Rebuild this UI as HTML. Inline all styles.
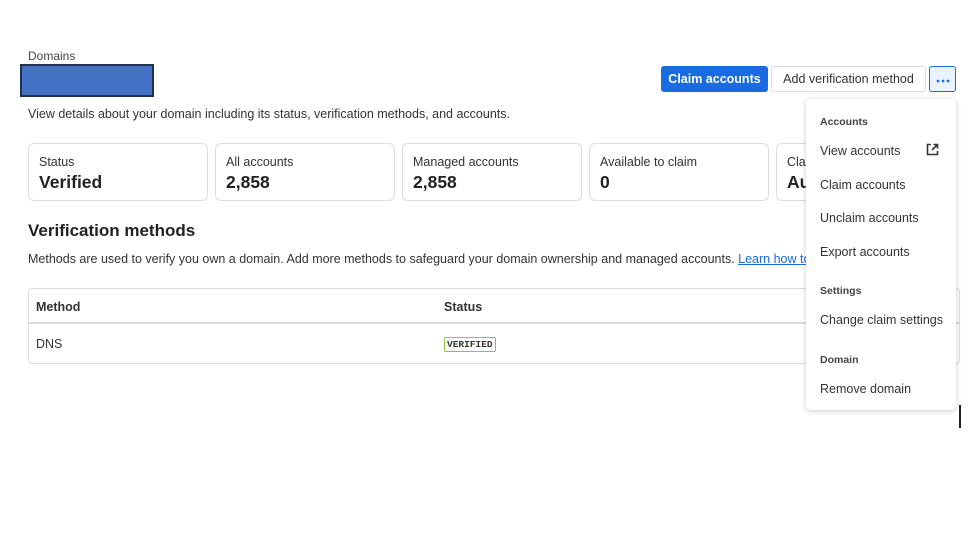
<!DOCTYPE html>
<html><head><style>
*{box-sizing:border-box;margin:0;padding:0}
body{width:973px;height:540px;background:#fff;font-family:"Liberation Sans",sans-serif;color:#222;position:relative;overflow:hidden}
.a{position:absolute}
.card{position:absolute;top:143px;height:58px;border:1px solid #ddd;border-radius:6px;padding:11px 10px;width:180px;background:#fff}
.card .l{font-size:12.5px;color:#333}
.card .v{font-size:17.5px;font-weight:bold;margin-top:3px;color:#222}
.btn{position:absolute;top:66px;height:26px;border-radius:3px;font-size:12.5px;line-height:24px;text-align:center}
.menu{position:absolute;left:806px;top:99px;width:150px;height:311px;background:#fff;border-radius:5px;box-shadow:0 1px 6px rgba(0,0,0,.2)}
.menu div{position:absolute;left:14px;font-size:12.5px;color:#333}
.menu .h{font-size:10.5px;font-weight:bold;color:#444}
</style></head><body>
<div class="a" style="left:28px;top:49px;font-size:12px;color:#444">Domains</div>
<div class="a" style="left:20px;top:64px;width:134px;height:33px;background:#4472c4;border:2px solid #22304f"></div>
<div class="a" style="left:28px;top:107px;font-size:12.5px;color:#333">View details about your domain including its status, verification methods, and accounts.</div>
<div class="btn" style="left:661px;width:107px;background:#1a6be0;color:#fff;font-weight:bold;border:1px solid #1a6be0">Claim accounts</div>
<div class="btn" style="left:771px;width:155px;border:1px solid #ddd;color:#333">Add verification method</div>
<div class="btn" style="left:929px;width:27px;border:1px solid #1a6be0;background:#eaf2fd"><svg style="margin-top:10px" width="14" height="4" viewBox="0 0 14 4" fill="#1a6be0"><circle cx="2" cy="2" r="1.4"/><circle cx="7" cy="2" r="1.4"/><circle cx="12" cy="2" r="1.4"/></svg></div>
<div class="card" style="left:28px"><div class="l">Status</div><div class="v">Verified</div></div>
<div class="card" style="left:215px"><div class="l">All accounts</div><div class="v">2,858</div></div>
<div class="card" style="left:402px"><div class="l">Managed accounts</div><div class="v">2,858</div></div>
<div class="card" style="left:589px"><div class="l">Available to claim</div><div class="v">0</div></div>
<div class="card" style="left:776px"><div class="l">Claim</div><div class="v">Auto</div></div>
<div class="a" style="left:28px;top:221px;font-size:17px;font-weight:bold;color:#222">Verification methods</div>
<div class="a" style="left:28px;top:252px;font-size:12.5px;color:#333;white-space:nowrap">Methods are used to verify you own a domain. Add more methods to safeguard your domain ownership and managed accounts. <span style="color:#1a6be0;text-decoration:underline">Learn how to</span></div>
<div class="a" style="left:28px;top:288px;width:932px;height:76px;border:1px solid #ddd;border-radius:4px">
<div class="a" style="left:0;top:33px;width:100%;border-top:2px solid #ddd"></div>
<div class="a" style="left:7px;top:11px;font-size:12.5px;font-weight:bold;color:#333">Method</div>
<div class="a" style="left:415px;top:11px;font-size:12.5px;font-weight:bold;color:#333">Status</div>
<div class="a" style="left:7px;top:48px;font-size:12.5px;color:#333">DNS</div>
<div class="a" style="left:415px;top:48px;font-size:9.5px;font-weight:bold;border:1px solid #8cc63f;border-radius:2px;padding:1px 2px;color:#333;font-family:'Liberation Mono',monospace">VERIFIED</div>
</div>
<div class="menu">
<div class="h" style="top:17px">Accounts</div>
<div style="top:45px">View accounts</div>
<svg class="a" style="left:120px;top:44px" width="13" height="13" viewBox="0 0 13 13" fill="none" stroke="#333" stroke-width="1.6"><path d="M5 1.5H1.5v10h10V8"/><path d="M7.5 1.5h4v4M11.5 1.5 6 7"/></svg>
<div style="top:79px">Claim accounts</div>
<div style="top:112px">Unclaim accounts</div>
<div style="top:146px">Export accounts</div>
<div class="h" style="top:186px">Settings</div>
<div style="top:214px">Change claim settings</div>
<div class="h" style="top:255px">Domain</div>
<div style="top:283px">Remove domain</div>
</div>
<div class="a" style="left:959px;top:405px;width:2px;height:23px;background:#222"></div>
</body></html>
